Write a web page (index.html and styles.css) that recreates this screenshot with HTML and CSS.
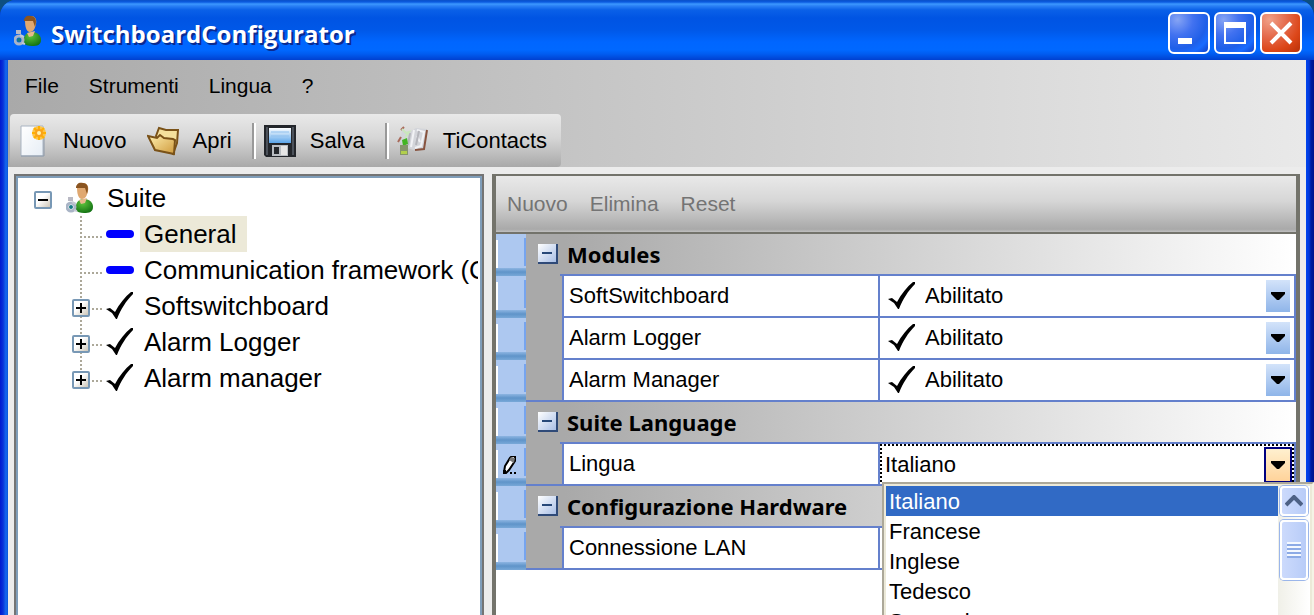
FILE: index.html
```html
<!DOCTYPE html>
<html lang="it">
<head>
<meta charset="utf-8">
<title>SwitchboardConfigurator</title>
<link rel="stylesheet" href="styles.css">
</head>
<body>
<svg class="defs" aria-hidden="true">
  <defs>
    <linearGradient id="gold" x1="0" y1="0" x2="1" y2="1"><stop offset="0" stop-color="#fff0b0"/><stop offset="1" stop-color="#cf9a3c"/></linearGradient>
    <linearGradient id="paper" x1="0" y1="0" x2="1" y2="1"><stop offset="0" stop-color="#fff"/><stop offset="1" stop-color="#e6edf5"/></linearGradient>
    <linearGradient id="label" x1="0" y1="0" x2="0" y2="1"><stop offset="0" stop-color="#fff"/><stop offset="1" stop-color="#5aa5ea"/></linearGradient>
    <radialGradient id="green" cx=".4" cy=".3" r=".8"><stop offset="0" stop-color="#5cc43c"/><stop offset="1" stop-color="#0c6a10"/></radialGradient>
    <symbol id="user" viewBox="0 0 28 32">
      <path d="M10 28c-1-7 2-11 8-11 6 0 9 4 9 8 0 5-4 6-9 6-4 0-7-1-8-3z" fill="url(#green)"/>
      <path d="M13 18l8-2-2 5-4 1z" fill="#e6b98c"/>
      <path d="M11 5c0-3 3-4 6-4 4 0 6 3 5 8-1 5-3 8-6 8-4 0-5-6-5-12z" fill="#e0a870"/>
      <path d="M10 6c0-4 3-6 7-5 5 0 6 5 4 11l-2-6z" fill="#8a5420"/>
      <path d="M2 15h5v4H2z" fill="#b9b9c4"/>
      <circle cx="5" cy="25" r="4" fill="none" stroke="#a9b4c6" stroke-width="3"/>
      <circle cx="5" cy="25" r="2" fill="#167a86"/>
      <path d="M6 20l4 2M8 28l3 1" stroke="#c4c9d4" stroke-width="2"/>
    </symbol>
    <symbol id="check" viewBox="0 0 28 28"><path d="M0 17l4-1 5 4C13 12 19 5 25 0h2v2C20 9 15 17 11 27h-1l-4-6z"/></symbol>
    <symbol id="arrow" viewBox="0 0 14 8"><path d="M0 0h14v2L8 8H6L0 2z"/></symbol>
  </defs>
</svg>
<div class="window">
  <header class="titlebar">
    <svg class="title-icon"><use href="#user"/></svg>
    <h1>SwitchboardConfigurator</h1>
    <div class="controls">
      <button class="control" aria-label="Riduci a icona"><svg viewBox="0 0 36 36"><path d="M7 23h14v6H7z" fill="#fff"/></svg></button>
      <button class="control" aria-label="Ingrandisci"><svg viewBox="0 0 36 36"><path d="M7 7h22v22H7zM9 13v14h18V13z" fill="#fff" fill-rule="evenodd"/></svg></button>
      <button class="control close" aria-label="Chiudi"><svg viewBox="0 0 36 36"><path d="M8 8l20 20M28 8L8 28" stroke="#fff" stroke-width="4"/></svg></button>
    </div>
  </header>
  <div class="client">
    <div class="bars">
      <nav class="menu">
        <button>File</button><button>Strumenti</button><button>Lingua</button><button>?</button>
      </nav>
      <div class="toolbar" role="toolbar" aria-label="Strumenti">
        <button>
          <svg viewBox="0 0 32 32"><path d="M4 1h22v30H4z" fill="url(#paper)" stroke="#a9b4c2" stroke-width="1"/><path d="M4 31h23V12" fill="none" stroke="#8e9aaa"/><circle cx="22" cy="8" r="7" fill="#fcc34a"/><path d="M22 1v14M15 8h14M17 3l10 10M27 3L17 13" stroke="#ffb000" stroke-width="2"/><circle cx="22" cy="8" r="4" fill="#f9a21c"/><circle cx="22" cy="8" r="2" fill="#fff3b0"/></svg>
          Nuovo
        </button>
        <button>
          <svg viewBox="0 0 32 32"><path d="M9 11l3-8 7 2h12l-1 13-4 11-14-10z" fill="#f4e09c" stroke="#7a5218" stroke-width="2"/><path d="M1 11l9 2 3-3 4 3 9 1 2 1-1 14-19-4z" fill="url(#gold)" stroke="#7a5218" stroke-width="2"/></svg>
          Apri
        </button>
        <span class="separator"></span>
        <button>
          <svg viewBox="0 0 32 32"><path d="M0 0h32v32H2l-2-2z" fill="#23262b"/><path d="M2 2h2v28H2zM28 2h2v28h-2z" fill="#4c525b"/><path d="M5 3h22v15H5z" fill="url(#label)"/><path d="M7 7h18M7 11h18" stroke="#8fc0ee" stroke-width="1"/><path d="M8 20h16v11H8z" fill="#b9bdc2"/><path d="M10 22h5v7h-5z" fill="#25282c"/><path d="M17 21h6v9h-6z" fill="#e6e6e6"/></svg>
          Salva
        </button>
        <span class="separator"></span>
        <button>
          <svg viewBox="0 0 32 32"><path d="M3 16l2-10 8 1 6-4 11 1-3 20-10 1-10-3z" fill="#d3d5da"/><path d="M30 5l-3 19-9 1" fill="none" stroke="#87533f" stroke-width="2"/><path d="M17 5l-3 17M20 5l7 2-3 14-6 2M20 11l3 6" fill="none" stroke="#f1f2f5" stroke-width="2"/><path d="M13 8l-2 12M22 6l-3 14" stroke="#b4b5bb" stroke-width="2"/><path d="M4 5l3-3M1 17l3-5" stroke="#a86a5a" stroke-width="2"/><path d="M5 4l4 4 3-1-4 6" fill="none" stroke="#c9e6bc" stroke-width="2"/><path d="M5 15l5-2 1 6-5 2z" fill="#42b522"/><path d="M3 20h8v10H3z" fill="#85946b"/><path d="M4 26h6v3H4z" fill="#b2cf4c"/></svg>
          TiContacts
        </button>
      </div>
    </div>
    <main class="workspace">
      <aside class="tree">
        <div class="tree-row root">
          <button class="toggle" aria-label="Comprimi Suite"></button>
          <svg class="suite-icon"><use href="#user"/></svg>
          <span class="node">Suite</span>
        </div>
        <ul>
          <li class="tree-row"><span class="branch"></span><span class="dash"></span><span class="node selected">General</span></li>
          <li class="tree-row"><span class="branch"></span><span class="dash"></span><span class="node">Communication framework (C</span></li>
          <li class="tree-row"><span class="branch"><button class="toggle plus" aria-label="Espandi Softswitchboard"></button></span><svg class="check"><use href="#check"/></svg><span class="node">Softswitchboard</span></li>
          <li class="tree-row"><span class="branch"><button class="toggle plus" aria-label="Espandi Alarm Logger"></button></span><svg class="check"><use href="#check"/></svg><span class="node">Alarm Logger</span></li>
          <li class="tree-row"><span class="branch"><button class="toggle plus" aria-label="Espandi Alarm manager"></button></span><svg class="check"><use href="#check"/></svg><span class="node">Alarm manager</span></li>
        </ul>
      </aside>
      <section class="editor">
        <div class="editor-bar" role="toolbar" aria-label="Modifica">
          <button disabled>Nuovo</button><button disabled>Elimina</button><button disabled>Reset</button>
        </div>
        <table class="grid">
          <colgroup><col class="col-mark"><col class="col-indent"><col class="col-name"><col></colgroup>
          <tbody>
            <tr class="group"><td class="mark"></td><th colspan="3"><span class="group-title"><button class="fold" aria-label="Comprimi Modules"></button>Modules</span></th></tr>
            <tr><td class="mark"></td><td class="indent"></td><td class="name"><label for="m1">SoftSwitchboard</label></td><td class="value"><div class="field"><svg class="check"><use href="#check"/></svg><select id="m1"><option>Abilitato</option><option>Disabilitato</option></select><span class="drop"><svg><use href="#arrow"/></svg></span></div></td></tr>
            <tr><td class="mark"></td><td class="indent"></td><td class="name"><label for="m2">Alarm Logger</label></td><td class="value"><div class="field"><svg class="check"><use href="#check"/></svg><select id="m2"><option>Abilitato</option><option>Disabilitato</option></select><span class="drop"><svg><use href="#arrow"/></svg></span></div></td></tr>
            <tr class="last"><td class="mark"></td><td class="indent"></td><td class="name"><label for="m3">Alarm Manager</label></td><td class="value"><div class="field"><svg class="check"><use href="#check"/></svg><select id="m3"><option>Abilitato</option><option>Disabilitato</option></select><span class="drop"><svg><use href="#arrow"/></svg></span></div></td></tr>
            <tr class="group"><td class="mark"></td><th colspan="3"><span class="group-title"><button class="fold" aria-label="Comprimi Suite Language"></button>Suite Language</span></th></tr>
            <tr class="last"><td class="mark"><svg class="pencil" viewBox="0 0 14 18"><path d="M1 16l1-6 5-8 2-2h3v5l-6 9-3 3z" fill="#fff" stroke="#000" stroke-width="2"/><path d="M6 4l2-3 4 1-1 5z" fill="#777"/><path d="M0 14h3v4H0zM7 16h2v2H7zM11 16h2v2h-2z"/></svg></td><td class="indent"></td><td class="name"><label for="lang">Lingua</label></td><td class="value open">
              <div class="field editing"><input id="lang" type="text" value="Italiano" role="combobox" aria-expanded="true" aria-controls="langs"><button class="drop active" aria-label="Apri elenco"><svg><use href="#arrow"/></svg></button></div>
              <div class="popup">
                <ul id="langs" role="listbox" aria-label="Lingua">
                  <li role="option" aria-selected="true">Italiano</li><li role="option">Francese</li><li role="option">Inglese</li><li role="option">Tedesco</li><li role="option">Spagnolo</li>
                </ul>
                <div class="scroll">
                  <button class="scroll-up" aria-label="Su"><svg viewBox="0 0 18 12"><path d="M1 10l8-8 8 8" fill="none" stroke="#4d6185" stroke-width="4"/></svg></button>
                  <div class="thumb"><span class="grip"></span></div>
                </div>
              </div>
            </td></tr>
            <tr class="group"><td class="mark"></td><th colspan="3"><span class="group-title"><button class="fold" aria-label="Comprimi Configurazione Hardware"></button>Configurazione Hardware</span></th></tr>
            <tr class="last"><td class="mark"></td><td class="indent"></td><td class="name">Connessione LAN</td><td class="value"></td></tr>
          </tbody>
        </table>
      </section>
    </main>
  </div>
</div>
</body>
</html>
```
FILE: styles.css
```css
* { box-sizing: border-box; }
body {
  margin: 0;
  height: 100vh;
  overflow: hidden;
  background: #0d4f80;
  color: #000;
  font: 22px/28px "Liberation Sans", Arial, sans-serif;
}
button, input, select { font: inherit; color: inherit; border: 0; padding: 0; background: none; }
ul { list-style: none; margin: 0; padding: 0; }
svg { flex: none; display: block; }
.defs { position: absolute; width: 0; height: 0; }

.window {
  display: flex;
  flex-direction: column;
  height: 100%;
  padding: 0 8px;
  border-radius: 16px 16px 0 0;
  background:
    linear-gradient(90deg, #0019cf, #0831d9 3px, #166aee 6px, #0855dd 8px) left / 8px 100% no-repeat,
    linear-gradient(90deg, #0045f0, #0038dc 3px, #001da0 5px, #00138c) right / 8px 100% no-repeat,
    #0855dd;
  overflow: hidden;
}
.titlebar {
  display: flex;
  align-items: center;
  flex: none;
  height: 60px;
  margin: 0 -8px;
  padding: 6px 12px 0 14px;
  background: linear-gradient(#0a50c8 0, #0a5ae0 2px, #3c98ff 4px, #2a80f5 6px, #0a60e8 10px, #0054e3 18px, #0058e8 30px, #0066ff 42px, #0068ff 50px, #005cf0 54px, #0040d0 60px);
}
.title-icon { width: 28px; height: 32px; margin: 0 9px 4px 0; }
h1 { flex: 1; margin: 0; padding-top: 2px; color: #fff; font: bold 24px/32px "Open Sans", sans-serif; text-shadow: 2px 2px 0 #0a2a90; }
.controls { display: flex; gap: 4px; }
.control {
  width: 42px;
  height: 42px;
  border: 2px solid #fff;
  border-radius: 6px;
  background: radial-gradient(circle at 20% 15%, #86a4f4 0, #4272f0 35%, #1f5fe8 65%, #1a6cff 80%, #1040c8 100%);
}
.control svg { width: 36px; height: 36px; margin: 1px; }
.control.close { background: radial-gradient(circle at 20% 15%, #f0a088 0, #e4694a 40%, #dc4618 70%, #b83008 100%); }

.client { display: flex; flex-direction: column; flex: 1; min-height: 0; background: #ececec; }
.bars { background: linear-gradient(90deg, #a9a9a9, #e9e9e9); }
.menu { display: flex; gap: 30px; padding: 12px 17px 14px; font-size: 21px; }
.toolbar {
  display: inline-flex;
  align-items: center;
  height: 53px;
  margin-left: 2px;
  padding: 0 14px 0 7px;
  border-radius: 4px;
  background: linear-gradient(#e9e9e9, #d6d6d6 45%, #a9a9a9);
  vertical-align: top;
}
.toolbar button { display: flex; align-items: center; gap: 14px; margin-right: 20px; }
.toolbar button:last-child { margin-right: 0; }
.toolbar button svg { width: 32px; height: 32px; }
.separator { width: 4px; height: 36px; margin-right: 8px; border-left: 2px solid #999; border-right: 2px solid #fff; }

.workspace { display: flex; flex: 1; gap: 8px; min-height: 0; padding: 7px 6px 0; }
.tree { flex: 0 0 470px; overflow: hidden; padding: 2px 2px 0 0; border: 2px solid #747474; border-bottom: 0; background: #fff; box-shadow: inset 2px 2px #7f9db9, inset -2px 0 #7f9db9; font-size: 26px; line-height: 36px; }
.tree-row { display: flex; align-items: center; height: 36px; padding-left: 56px; white-space: nowrap; overflow: hidden; }
.tree ul { margin-right: 2px; }
.root { padding-left: 18px; margin-top: 2px; }
.root .suite-icon { width: 28px; height: 32px; margin: 0 9px 0 14px; }
.node { padding: 0 4px; }
.tree-row .check, .dash { flex: none; margin: 0 6px 0 4px; }
.node.selected { padding-right: 10px; background: #ece9d8; }
.check { width: 28px; height: 28px; }
.dash { width: 28px; height: 8px; border-radius: 4px; background: #00f; }
.branch {
  display: grid;
  align-items: center;
  flex: none;
  width: 30px;
  height: 36px;
  background:
    repeating-linear-gradient(#aca899 0 2px, #fff 2px 4px) 8px 0 / 2px 100% no-repeat,
    repeating-linear-gradient(90deg, #aca899 0 2px, #fff 2px 4px) 12px 20px / 18px 2px no-repeat;
}
li:last-child .branch { background-size: 2px 20px, 18px 2px; }
.toggle {
  width: 18px;
  height: 18px;
  margin-top: 4px;
  border: 2px solid #7898b5;
  border-radius: 2px;
  background:
    linear-gradient(#000, #000) center / 10px 2px no-repeat,
    linear-gradient(135deg, #fff 40%, #cdc6b8);
}
.toggle.plus {
  background:
    linear-gradient(#000, #000) center / 10px 2px no-repeat,
    linear-gradient(#000, #000) center / 2px 10px no-repeat,
    linear-gradient(135deg, #fff 40%, #cdc6b8);
}

.editor { flex: 1; min-width: 0; border: solid #73736b; border-width: 2px 4px 0; background: #fff; }
.editor-bar { display: flex; gap: 22px; padding: 14px 11px; font-size: 21px; border-bottom: 2px solid #73736b; background: linear-gradient(#e9e9e9, #d6d6d6 45%, #a9a9a9 95%, #c0c0c0); }
.editor-bar button { color: #747474; }

.grid { width: 100%; table-layout: fixed; border-collapse: separate; border-spacing: 0; }
.col-mark { width: 30px; }
.col-indent { width: 36px; }
.col-name { width: 318px; }
.grid td, .grid th { height: 42px; padding: 0; text-align: left; }
.mark {
  background:
    linear-gradient(#fff, #fff) 0 6px / 2px 28px no-repeat,
    linear-gradient(#76a4ee, #76a4ee) 28px 4px / 2px 28px no-repeat,
    linear-gradient(#adc8f0 34px, #8db5e2 34px, #5f94c9 38px, #78a8d8 42px);
}
.pencil { width: 14px; height: 18px; margin-left: 7px; }
.grid th {
  background: linear-gradient(90deg, #a9a9a9 5%, #fff);
  background-clip: padding-box;
  font: bold 22px/28px "Noto Sans", sans-serif;
}
.group th { border-image: linear-gradient(90deg, #a9a9a9 36px, #6480cc 36px) 2; border-style: solid; border-width: 0 0 2px; }
.group-title { display: flex; align-items: center; gap: 9px; padding-left: 12px; }
.fold {
  width: 20px;
  height: 20px;
  border: solid #2f4a78;
  border-width: 0 2px 2px 0;
  background:
    linear-gradient(#274878, #274878) center / 10px 2px no-repeat,
    linear-gradient(135deg, #fff, #a9bfe6);
}
.indent { background: #a9a9a9; border-right: 2px solid #6480cc; }
.last .indent { border-bottom: 2px solid #6480cc; }
.name { border: solid #6480cc; border-width: 0 2px 2px 0; }
.grid .indent + .name { padding-left: 7px; }
.grid .indent { border-right-width: 0; box-shadow: 2px 0 #6480cc; }
.value { border: solid #6480cc; border-width: 0 2px 2px 0; }
.field { display: flex; align-items: center; height: 40px; padding: 0 4px 0 8px; }
.field .check { margin-right: 9px; }
.field select { flex: 1; min-width: 0; height: 32px; appearance: none; }
.field input { flex: 1; min-width: 0; outline: 0; }
.drop { display: grid; place-items: center; width: 24px; height: 32px; background: linear-gradient(#d3e3fa, #8fb5e9); pointer-events: none; }
.drop svg { width: 14px; height: 8px; }
.field.editing { padding: 2px 2px 0 5px; background:
    repeating-linear-gradient(90deg, #000 0 2px, #fff 2px 4px) top / 100% 2px no-repeat,
    repeating-linear-gradient(#000 0 2px, #fff 2px 4px) left / 2px 100% no-repeat,
    repeating-linear-gradient(#000 0 2px, #fff 2px 4px) right / 2px 100% no-repeat; }
.drop.active { width: 28px; height: 36px; border: 2px solid #000080; background: linear-gradient(#fff0cf, #ffd39a); }
.open { position: relative; }
.popup {
  position: absolute;
  z-index: 2;
  top: 38px;
  left: 2px;
  right: -20px;
  display: flex;
  padding: 2px;
  border: 2px solid #aca899;
  border-right: 2px solid #f5f3e6;
  background: #ece9d8;
}
.popup ul { flex: 1; background: #fff; }
.popup li { height: 30px; padding: 2px 3px 0; }
.popup li[aria-selected] { background: #316ac5; color: #fff; }
.scroll { width: 32px; padding: 0 2px; background: linear-gradient(90deg, #f0f0e8, #fff); }
.scroll-up, .thumb {
  display: grid;
  place-items: center;
  width: 28px;
  border: 2px solid #fff;
  border-radius: 4px;
  background: linear-gradient(90deg, #ccdafc, #b8ccf8);
  box-shadow: 0 0 0 1px #9bb6ea;
}
.scroll-up { height: 30px; }
.scroll-up svg { width: 18px; height: 12px; }
.thumb { height: 60px; margin-top: 4px; }
.grip { width: 14px; height: 16px; background: repeating-linear-gradient(#f4f8ff 0 2px, #8caae6 2px 4px); }
```
